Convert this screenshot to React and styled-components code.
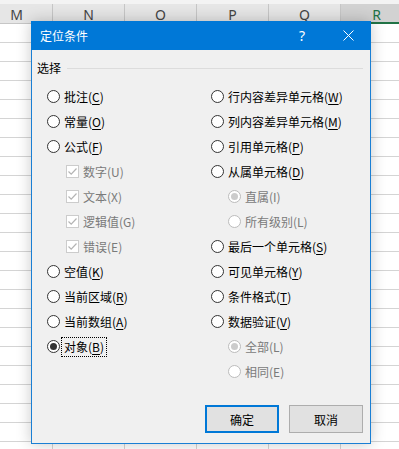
import React from 'react'
import styled, { createGlobalStyle } from 'styled-components'

const GlobalStyle = createGlobalStyle`
  html, body {
    margin: 0;
    padding: 0;
    overflow: hidden;
    background: #fff;
  }
`

const COLUMNS = ['M', 'N', 'O', 'P', 'Q', 'R']
const ROW_COUNT = 23

const leftOptions = [
    { type: 'radio', label: '批注', hotkey: 'C' },
    { type: 'radio', label: '常量', hotkey: 'O' },
    { type: 'radio', label: '公式', hotkey: 'F' },
    { type: 'check', label: '数字', hotkey: 'U', checked: true, disabled: true, indent: 19 },
    { type: 'check', label: '文本', hotkey: 'X', checked: true, disabled: true, indent: 19 },
    { type: 'check', label: '逻辑值', hotkey: 'G', checked: true, disabled: true, indent: 19 },
    { type: 'check', label: '错误', hotkey: 'E', checked: true, disabled: true, indent: 19 },
    { type: 'radio', label: '空值', hotkey: 'K' },
    { type: 'radio', label: '当前区域', hotkey: 'R' },
    { type: 'radio', label: '当前数组', hotkey: 'A' },
    { type: 'radio', label: '对象', hotkey: 'B', checked: true, focused: true },
]

const rightOptions = [
    { type: 'radio', label: '行内容差异单元格', hotkey: 'W' },
    { type: 'radio', label: '列内容差异单元格', hotkey: 'M' },
    { type: 'radio', label: '引用单元格', hotkey: 'P' },
    { type: 'radio', label: '从属单元格', hotkey: 'D' },
    { type: 'radio', label: '直属', hotkey: 'I', checked: true, disabled: true, indent: 17 },
    { type: 'radio', label: '所有级别', hotkey: 'L', disabled: true, indent: 17 },
    { type: 'radio', label: '最后一个单元格', hotkey: 'S' },
    { type: 'radio', label: '可见单元格', hotkey: 'Y' },
    { type: 'radio', label: '条件格式', hotkey: 'T' },
    { type: 'radio', label: '数据验证', hotkey: 'V' },
    { type: 'radio', label: '全部', hotkey: 'L', checked: true, disabled: true, indent: 17 },
    { type: 'radio', label: '相同', hotkey: 'E', disabled: true, indent: 17 },
]

const Option = ({ option }) => {
    const { type, label, hotkey, checked, disabled, focused, indent } = option
    return (
        <OptionRow $indent={indent || 0}>
            {type === 'radio'
                ? <Radio $checked={checked} $disabled={disabled} />
                : (
                    <CheckBox $disabled={disabled}>
                        {checked && (
                            <svg width="11" height="11" viewBox="0 0 11 11">
                                <path d="M1.5 5.5 L4.2 8.2 L9.5 2.5" fill="none" stroke="#b4b4b4" strokeWidth="1.2" />
                            </svg>
                        )}
                    </CheckBox>
                )}
            <OptionLabel $disabled={disabled} $focused={focused}>
                {label}(
                {disabled ? hotkey : <Hotkey>{hotkey}</Hotkey>}
                )
            </OptionLabel>
        </OptionRow>
    )
}

const App = () => {
    const rows = Array.from({ length: ROW_COUNT })

    return (
        <>
            <GlobalStyle />
            <Sheet>
                <TopStrip />
                <HeaderRow>
                    {COLUMNS.map(col => (
                        <HeaderCell key={col} $selected={col === 'R'}>{col}</HeaderCell>
                    ))}
                </HeaderRow>
                {rows.map((_, i) => (
                    <GridRow key={i}>
                        {COLUMNS.map(col => <GridCell key={col} />)}
                    </GridRow>
                ))}

                <Dialog>
                    <TitleBar>
                        <Title>定位条件</Title>
                        <TitleButton>?</TitleButton>
                        <TitleButton>
                            <svg width="11" height="11" viewBox="0 0 11 11">
                                <path d="M0.5 0.5 L10.5 10.5 M10.5 0.5 L0.5 10.5" stroke="#fff" strokeWidth="1" />
                            </svg>
                        </TitleButton>
                    </TitleBar>

                    <Body>
                        <GroupHeader>
                            <span>选择</span>
                            <GroupLine />
                        </GroupHeader>
                        <Options>
                            <Column>
                                {leftOptions.map(o => <Option key={o.label} option={o} />)}
                            </Column>
                            <Column>
                                {rightOptions.map(o => <Option key={o.label} option={o} />)}
                            </Column>
                        </Options>
                    </Body>

                    <Footer>
                        <Button $primary>确定</Button>
                        <Button>取消</Button>
                    </Footer>
                </Dialog>
            </Sheet>
        </>
    )
}

const Sheet = styled.div`
    position: relative;
    width: 399px;
    height: 449px;
    overflow: hidden;
    background: #fff;
    font-family: "Noto Sans CJK SC", "Noto Sans", sans-serif;
`

const TopStrip = styled.div`
    height: 4px;
    background: #f3f3f3;
`

const HeaderRow = styled.div`
    display: flex;
    margin-left: -19px;
`

const HeaderCell = styled.div`
    flex: 0 0 72px;
    box-sizing: border-box;
    height: 20px;
    display: flex;
    align-items: center;
    justify-content: center;
    padding-top: 2px;
    font-family: "Noto Sans", sans-serif;
    font-size: 14px;
    color: ${p => p.$selected ? '#217346' : '#444'};
    background: ${p => p.$selected ? '#d2d2d2' : '#e6e6e6'};
    border-right: 1px solid #c6c6c6;
    border-bottom: ${p => p.$selected ? '2px solid #217346' : '1px solid #c6c6c6'};
`

const GridRow = styled.div`
    display: flex;
    margin-left: -19px;
`

const GridCell = styled.div`
    flex: 0 0 72px;
    box-sizing: border-box;
    height: 19px;
    border-right: 1px solid #d4d4d4;
    border-bottom: 1px solid #d4d4d4;
`

const Dialog = styled.div`
    position: absolute;
    left: 31px;
    top: 21px;
    width: 340px;
    height: 423px;
    box-sizing: border-box;
    display: flex;
    flex-direction: column;
    background: #f0f0f0;
    border: 1px solid #1a7fd4;
    box-shadow: 0 0 14px rgba(0, 0, 0, 0.22);
    font-size: 12px;
    color: #000;
`

const TitleBar = styled.div`
    height: 29px;
    margin: -1px -1px 0;
    display: flex;
    align-items: center;
    background: #0078d7;
    color: #fff;
    padding-left: 9px;
`

const Title = styled.div`
    flex: 1;
    font-size: 12px;
    line-height: 16px;
`

const TitleButton = styled.div`
    width: 46px;
    height: 29px;
    display: flex;
    align-items: center;
    justify-content: center;
    font-family: "Noto Sans", sans-serif;
    font-size: 14px;
`

const Body = styled.div`
    padding: 10px 7px 0 5px;
`

const GroupHeader = styled.div`
    display: flex;
    align-items: center;
    gap: 6px;
    height: 16px;
    line-height: 16px;
`

const GroupLine = styled.div`
    flex: 1;
    height: 1px;
    background: #dcdcdc;
`

const Options = styled.div`
    display: grid;
    grid-template-columns: 164px 1fr;
    margin-top: 8px;
    padding-left: 10px;
`

const Column = styled.div`
    display: flex;
    flex-direction: column;
`

const OptionRow = styled.div`
    height: 25px;
    display: flex;
    align-items: center;
    gap: 4px;
    padding-left: ${p => p.$indent}px;
`

const Radio = styled.span`
    position: relative;
    flex: 0 0 13px;
    height: 13px;
    box-sizing: border-box;
    border-radius: 50%;
    border: 1px solid ${p => p.$disabled ? '#bcbcbc' : '#333'};
    background: #fff;

    &::after {
        content: '';
        display: ${p => p.$checked ? 'block' : 'none'};
        position: absolute;
        left: 2px;
        top: 2px;
        width: 7px;
        height: 7px;
        border-radius: 50%;
        background: ${p => p.$disabled ? '#cccccc' : '#333'};
    }
`

const CheckBox = styled.span`
    flex: 0 0 13px;
    height: 13px;
    box-sizing: border-box;
    display: flex;
    align-items: center;
    justify-content: center;
    border: 1px solid ${p => p.$disabled ? '#cccccc' : '#333'};
    background: #fff;
`

const OptionLabel = styled.span`
    font-size: 12px;
    line-height: 16px;
    white-space: nowrap;
    color: ${p => p.$disabled ? '#7a7a7a' : '#000'};
    padding: 1px 2px;
    margin-left: -2px;
    outline: ${p => p.$focused ? '1px dotted #000' : 'none'};
`

const Hotkey = styled.u`
    text-underline-offset: 2px;
`

const Footer = styled.div`
    margin-top: auto;
    display: flex;
    justify-content: flex-end;
    gap: 10px;
    padding: 0 7px 10px 0;
`

const Button = styled.div`
    width: 74px;
    height: 28px;
    box-sizing: border-box;
    display: flex;
    align-items: center;
    justify-content: center;
    background: #e1e1e1;
    border: ${p => p.$primary ? '2px solid #0078d7' : '1px solid #adadad'};
    font-size: 12px;
    color: #000;
`

export default App
